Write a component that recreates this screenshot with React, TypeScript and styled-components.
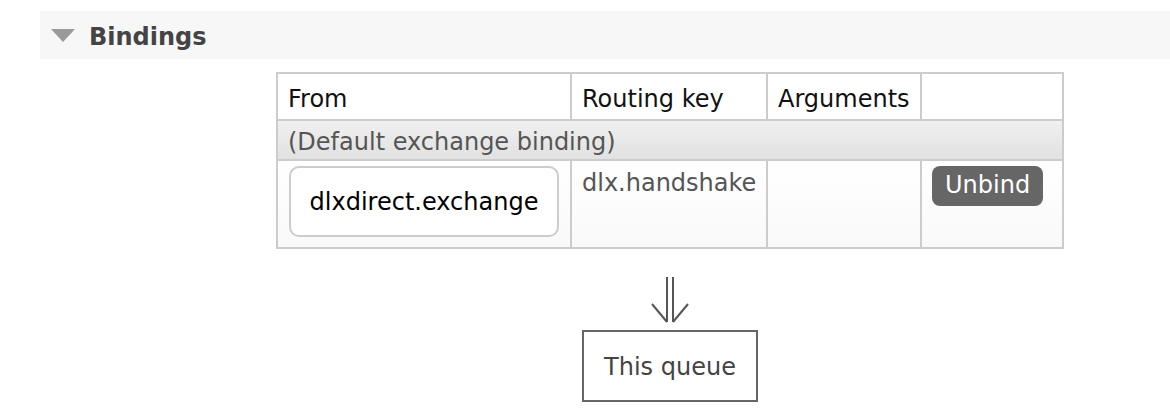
import React from "react";
import styled, { createGlobalStyle } from "styled-components";

const GlobalStyle = createGlobalStyle`
  *, *::before, *::after { box-sizing: border-box; }
  html, body {
    margin: 0;
    padding: 0;
    background: #fff;
    overflow: hidden;
  }
  body {
    font-family: "DejaVu Sans", Verdana, sans-serif;
    font-size: 24px;
    color: #000;
  }
`;

const Page = styled.div`
  margin: 11px 0 0 40px;
`;

const SectionHeader = styled.div`
  display: flex;
  align-items: center;
  height: 48px;
  padding: 0 0 0 11px;
  background: #f7f7f7;
  gap: 14px;
`;

const Toggle = styled.span`
  display: block;
  width: 0;
  height: 0;
  margin-top: 1px;
  border-left: 12px solid transparent;
  border-right: 12px solid transparent;
  border-top: 13px solid #9a9a9a;
`;

const Title = styled.h2`
  margin: 0;
  font-size: 24px;
  font-weight: bold;
  line-height: 28px;
  color: #444;
  padding-top: 3px;
`;

const Body = styled.div`
  display: flex;
  flex-direction: column;
  align-items: center;
  padding: 13px 0 0 130px;
`;

const Table = styled.table`
  table-layout: fixed;
  border-collapse: separate;
  border-spacing: 0;
  width: 788px;
  border-top: 2px solid #ccc;
  border-left: 2px solid #ccc;
`;

const Th = styled.th<{ $w: number }>`
  width: ${(p) => p.$w}px;
  padding: 11px 10px 6px;
  text-align: left;
  font-weight: normal;
  line-height: 28px;
  color: #111;
  border-right: 2px solid #ccc;
  border-bottom: 2px solid #ccc;
  white-space: nowrap;
`;

const GroupCell = styled.td`
  padding: 7px 10px 3px;
  line-height: 28px;
  color: #555;
  background: linear-gradient(#f0f0f0, #e1e1e1);
  border-right: 2px solid #ccc;
  border-bottom: 2px solid #ccc;
  white-space: nowrap;
`;

const DataRow = styled.tr`
  background: linear-gradient(#ffffff, #f9f9f9);
`;

const Td = styled.td<{ $pad?: string }>`
  vertical-align: top;
  padding: ${(p) => p.$pad ?? "8px 10px 10px"};
  line-height: 28px;
  color: #555;
  border-right: 2px solid #ccc;
  border-bottom: 2px solid #ccc;
  white-space: nowrap;
`;

const ExchangeBox = styled.div`
  width: 270px;
  padding: 20px 10px 19px;
  line-height: 28px;
  text-align: center;
  border: 2px solid #ccc;
  border-radius: 10px;
  background: #fff;
  color: #000;
  white-space: nowrap;
`;

const Button = styled.button`
  display: inline-block;
  font-family: inherit;
  font-size: 24px;
  line-height: 28px;
  padding: 5px 13px 7px;
  border: none;
  border-radius: 8px;
  background: #666;
  color: #fff;
  cursor: pointer;
`;

const ArrowWrap = styled.div`
  margin-top: 28px;
  width: 40px;
  height: 46px;
`;

const QueueBox = styled.div`
  margin-top: 7px;
  padding: 21px 20px 19px;
  line-height: 28px;
  border: 2px solid #666;
  color: #444;
  white-space: nowrap;
`;

const DownArrow = () => (
  <svg width="40" height="46" viewBox="0 0 40 46" fill="none" stroke="#555" strokeWidth="2">
    <line x1="17" y1="0" x2="17" y2="45" />
    <line x1="23" y1="0" x2="23" y2="45" />
    <polyline points="2,27 17,45" />
    <polyline points="38,27 23,45" />
  </svg>
);

export default function App() {
  return (
    <>
      <GlobalStyle />
      <Page>
        <SectionHeader>
          <Toggle />
          <Title>Bindings</Title>
        </SectionHeader>
        <Body>
          <Table>
            <thead>
              <tr>
                <Th $w={294}>From</Th>
                <Th $w={196}>Routing key</Th>
                <Th $w={154}>Arguments</Th>
                <Th $w={142}></Th>
              </tr>
            </thead>
            <tbody>
              <tr>
                <GroupCell colSpan={4}>(Default exchange binding)</GroupCell>
              </tr>
              <DataRow>
                <Td $pad="5px 10px 10px 11px">
                  <ExchangeBox>dlxdirect.exchange</ExchangeBox>
                </Td>
                <Td>dlx.handshake</Td>
                <Td></Td>
                <Td $pad="5px 10px 10px 10px">
                  <Button>Unbind</Button>
                </Td>
              </DataRow>
            </tbody>
          </Table>
          <ArrowWrap>
            <DownArrow />
          </ArrowWrap>
          <QueueBox>This queue</QueueBox>
        </Body>
      </Page>
    </>
  );
}
